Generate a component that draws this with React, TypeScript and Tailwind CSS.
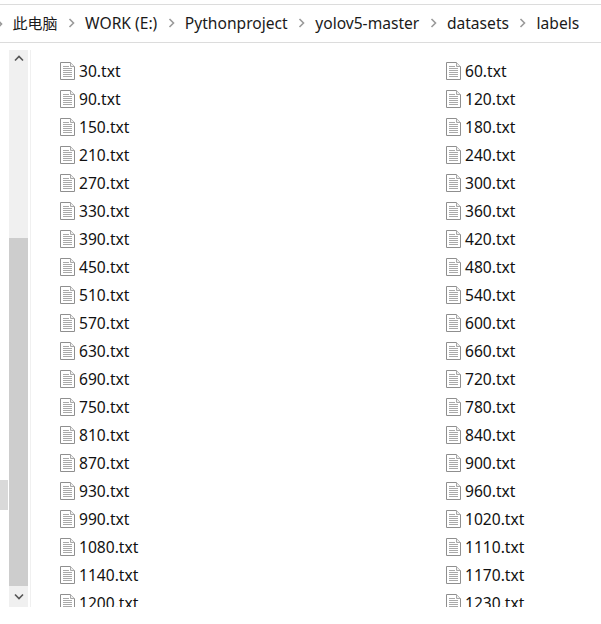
const crumbs = ['WORK (E:)', 'Pythonproject', 'yolov5-master', 'datasets', 'labels']

const rows = [
  ['30', '60'], ['90', '120'], ['150', '180'], ['210', '240'], ['270', '300'],
  ['330', '360'], ['390', '420'], ['450', '480'], ['510', '540'], ['570', '600'],
  ['630', '660'], ['690', '720'], ['750', '780'], ['810', '840'], ['870', '900'],
  ['930', '960'], ['990', '1020'], ['1080', '1110'], ['1140', '1170'], ['1200', '1230'],
]

function Chevron() {
  return (
    <svg width="7" height="10" viewBox="0 0 7 10" className="shrink-0">
      <path d="M1.5 1 L5.5 5 L1.5 9" fill="none" stroke="#9a9a9a" strokeWidth="1.6" />
    </svg>
  )
}

function TxtIcon() {
  return (
    <svg width="15" height="18" viewBox="0 0 15 18" className="shrink-0">
      <path d="M0.5 0.5 H10.5 L14.5 4.5 V17.5 H0.5 Z" fill="#fff" stroke="#8f8f8f" />
      <path d="M10.5 0.5 V4.5 H14.5" fill="#eee" stroke="#a8a8a8" />
      <path d="M3 4.5 H9 M3 6.5 H12 M3 8.5 H12 M3 10.5 H12 M3 12.5 H12 M3 14.5 H12" stroke="#a9a9a9" />
    </svg>
  )
}

function FileItem({ name }: { name: string }) {
  return (
    <div className="flex h-[28px] items-center">
      <TxtIcon />
      <span className="ml-[4px] mt-[2px] text-[15.6px] text-[#111111]">{name}.txt</span>
    </div>
  )
}

export default function App() {
  return (
    <div className="h-[624px] w-[601px] overflow-hidden bg-white font-['Noto_Sans','Noto_Sans_CJK_SC',sans-serif]">
      {/* Address bar */}
      <div className="mt-[4px] flex h-[39px] items-center border-y border-[#dcdcdc] text-[15.6px] text-[#1a1a1a]">
        <div className="w-[3px] shrink-0 overflow-hidden">
          <div className="-ml-[4px]"><Chevron /></div>
        </div>
        <span className="ml-[9.5px] text-[15px]">此电脑</span>
        {crumbs.map(c => (
          <div key={c} className="flex items-center">
            <span className="mx-[10.3px]"><Chevron /></span>
            <span>{c}</span>
          </div>
        ))}
      </div>

      <div className="mt-[7px] flex h-[557px]">
        {/* Left pane edge + scrollbar */}
        <div className="relative w-[9px] shrink-0">
          <div className="absolute left-0 top-[430px] h-[30px] w-[8px] bg-[#d9d9d9]" />
        </div>
        <div className="flex w-[19px] shrink-0 flex-col bg-[#f0f0f0]">
          <div className="flex h-[17px] items-center justify-center">
            <svg width="10" height="7" viewBox="0 0 10 7">
              <path d="M1 5.5 L5 1.5 L9 5.5" fill="none" stroke="#555" strokeWidth="1.6" />
            </svg>
          </div>
          <div className="h-[171px]" />
          <div className="h-[348px] bg-[#cdcdcd]" />
          <div className="flex flex-1 items-center justify-center">
            <svg width="10" height="7" viewBox="0 0 10 7">
              <path d="M1 1.5 L5 5.5 L9 1.5" fill="none" stroke="#555" strokeWidth="1.6" />
            </svg>
          </div>
        </div>
        <div className="ml-[2px] w-px shrink-0 bg-[#f0f0f0]" />

        {/* File list */}
        <div className="h-[557px] flex-1 overflow-hidden pl-[29px] pt-[7px]">
          {rows.map(([a, b]) => (
            <div key={a} className="grid grid-cols-[386px_1fr]">
              <FileItem name={a} />
              <FileItem name={b} />
            </div>
          ))}
        </div>
      </div>
    </div>
  )
}
